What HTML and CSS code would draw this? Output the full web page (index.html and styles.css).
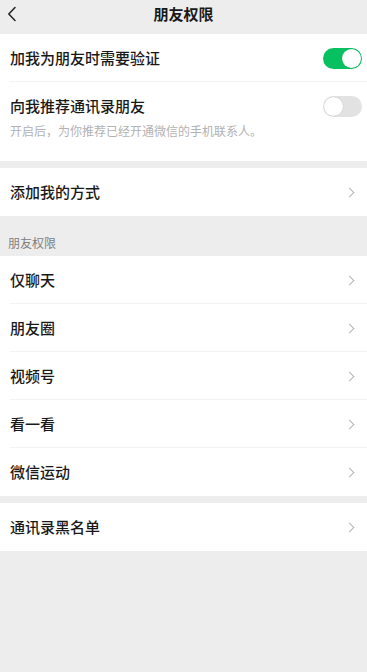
FILE: index.html
```html
<!DOCTYPE html>
<html lang="zh">

<head>
    <meta charset="UTF-8">
    <meta name="viewport" content="width=device-width, initial-scale=1.0">
    <title>朋友权限</title>
    <link rel="stylesheet" href="styles.css">
</head>

<body>
    <header class="nav">
        <span class="back">
            <svg width="10" height="16" viewBox="0 0 10 16">
                <path d="M8 1.5 L1.8 8 L8 14.5" fill="none" stroke="#222" stroke-width="1.5" stroke-linecap="round" stroke-linejoin="round"/>
            </svg>
        </span>
        <h1>朋友权限</h1>
    </header>

    <main>
        <section class="group">
            <div class="row line">
                <span class="label">加我为朋友时需要验证</span>
                <span class="switch on"></span>
            </div>
            <div class="row-tall">
                <div class="row-head">
                    <span class="label">向我推荐通讯录朋友</span>
                    <span class="switch"></span>
                </div>
                <p class="hint">开启后，为你推荐已经开通微信的手机联系人。</p>
            </div>
        </section>

        <section class="group gap">
            <div class="row">
                <span class="label">添加我的方式</span>
                <span class="arrow"></span>
            </div>
        </section>

        <div class="group-title">朋友权限</div>

        <section class="group">
            <div class="row line">
                <span class="label">仅聊天</span>
                <span class="arrow"></span>
            </div>
            <div class="row line">
                <span class="label">朋友圈</span>
                <span class="arrow"></span>
            </div>
            <div class="row line">
                <span class="label">视频号</span>
                <span class="arrow"></span>
            </div>
            <div class="row line">
                <span class="label">看一看</span>
                <span class="arrow"></span>
            </div>
            <div class="row">
                <span class="label">微信运动</span>
                <span class="arrow"></span>
            </div>
        </section>

        <section class="group gap">
            <div class="row">
                <span class="label">通讯录黑名单</span>
                <span class="arrow"></span>
            </div>
        </section>
    </main>
</body>

</html>
```

FILE: styles.css
```css
* {
    margin: 0;
    padding: 0;
    box-sizing: border-box;
}

body {
    font-family: "Noto Sans CJK SC", "Noto Sans", sans-serif;
    background-color: #ededed;
    color: #191919;
}

.nav {
    position: relative;
    height: 34px;
    padding-bottom: 6px;
    display: flex;
    align-items: center;
    justify-content: center;
}

.nav h1 {
    font-size: 15px;
    font-weight: bold;
    line-height: 28px;
}

.back {
    position: absolute;
    left: 7px;
    top: 6px;
    display: flex;
}

.group {
    background-color: #fff;
}

.group.gap {
    margin-top: 7px;
}

.row {
    position: relative;
    height: 48px;
    display: flex;
    align-items: center;
    justify-content: space-between;
    padding: 0 10px;
}

.row.line::after {
    content: "";
    position: absolute;
    left: 10px;
    right: 0;
    bottom: 0;
    height: 1px;
    background-color: #f3f3f3;
}

.label {
    font-size: 15px;
    line-height: 20px;
    font-weight: 500;
}

.row-tall {
    padding: 14px 10px 22px;
}

.row-head {
    display: flex;
    align-items: center;
    justify-content: space-between;
    height: 20px;
}

.hint {
    margin-top: 6px;
    font-size: 12px;
    line-height: 17px;
    color: #b2b2b2;
}

.switch {
    position: relative;
    width: 39px;
    height: 21px;
    margin-right: -5px;
    border-radius: 11px;
    background-color: #e2e2e2;
}

.switch::after {
    content: "";
    position: absolute;
    left: 1px;
    top: 1px;
    width: 19px;
    height: 19px;
    border-radius: 50%;
    background-color: #fff;
    box-shadow: 0 0 1px rgba(0, 0, 0, 0.25);
}

.switch.on {
    background-color: #07c160;
}

.switch.on::after {
    left: 19px;
}

.arrow {
    width: 7px;
    height: 7px;
    margin-right: 4px;
    border-top: 1.3px solid #b5b5b5;
    border-right: 1.3px solid #b5b5b5;
    transform: rotate(45deg);
}

.group-title {
    height: 40px;
    padding: 19px 8px 0;
    font-size: 12px;
    line-height: 16px;
    color: #7f7f7f;
}
```
